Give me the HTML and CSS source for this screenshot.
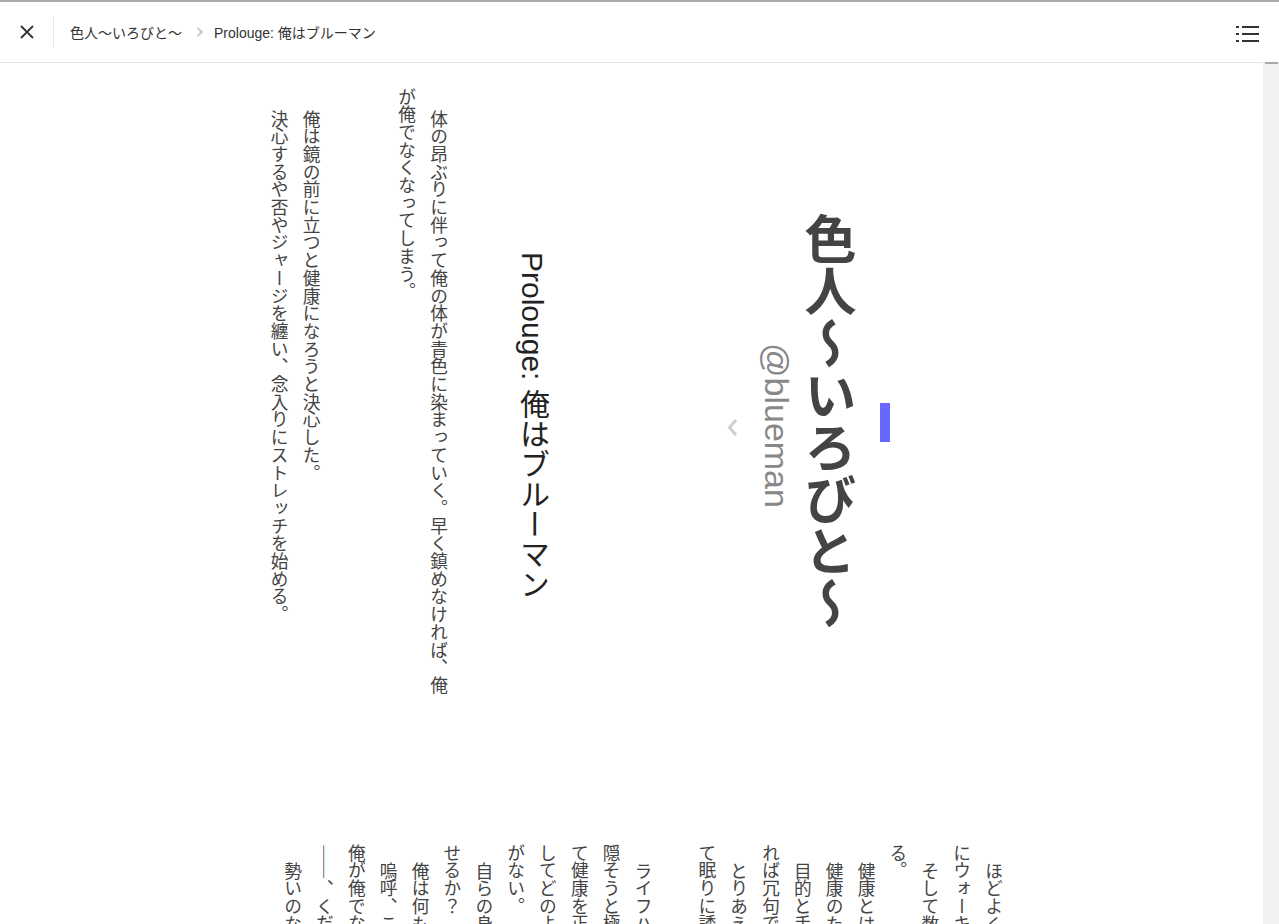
FILE: index.html
```html
<!DOCTYPE html>
<html lang="ja">
<head>
<meta charset="utf-8">
<title>Prolouge: 俺はブルーマン - 色人～いろびと～</title>
<link rel="stylesheet" href="styles.css">
</head>
<body>
<header class="topbar">
  <button class="icon-btn close-btn" aria-label="閉じる">
    <svg width="14" height="14" viewBox="0 0 14 14"><path d="M1 1 L13 13 M13 1 L1 13" stroke="#333" stroke-width="1.8" fill="none"/></svg>
  </button>
  <div class="divider"></div>
  <nav class="crumbs">
    <span class="crumb">色人～いろびと～</span>
    <svg class="crumb-sep" width="8" height="10" viewBox="0 0 8 10"><path d="M1.5 1 L6 5 L1.5 9" stroke="#c8c8c8" stroke-width="2" fill="none"/></svg>
    <span class="crumb">Prolouge: 俺はブルーマン</span>
  </nav>
  <button class="icon-btn toc-btn" aria-label="目次">
    <svg width="23" height="16" viewBox="0 0 23 16"><g fill="#333"><rect x="0" y="0" width="3" height="2"/><rect x="6" y="0" width="17" height="2"/><rect x="0" y="7" width="3" height="2"/><rect x="6" y="7" width="17" height="2"/><rect x="0" y="14" width="3" height="2"/><rect x="6" y="14" width="17" height="2"/></g></svg>
  </button>
</header>
<div class="main">
  <div class="viewport">
    <div class="pages">
      <section class="page page-first">
        <div class="title-block">
          <h1 class="book-title">色人～いろびと～</h1>
          <p class="author">@blueman</p>
        </div>
        <h2 class="chapter">Prolouge: 俺はブルーマン</h2>
        <p class="para first-para">体の昂ぶりに伴って俺の体が青色に染まっていく。早く鎮めなければ、俺が俺でなくなってしまう。</p>
        <p class="gap"></p>
        <p class="gap"></p>
        <p class="para">俺は鏡の前に立つと健康になろうと決心した。</p>
        <p class="para">決心するや否やジャージを纏い、念入りにストレッチを始める。</p>
        <span class="marker"></span>
        <span class="prev-page"><svg width="11" height="19" viewBox="0 0 11 19"><path d="M9 2 L2.5 9.5 L9 17" stroke="#cfcfcf" stroke-width="3" fill="none"/></svg></span>
      </section>
      <section class="page">
        <p class="para">ほどよく体がほぐれたところで、俺は玄関を出て近所の河川敷まで軽快<br>にウォーキングへ出かけた。朝の空気は澄んでいて心地よい。</p>
        <p class="para">そして数十分ほど歩いたところで、俺はふと立ち止まって考え始め<br>る。</p>
        <p class="para">健康とはいったい何なのだろうか。</p>
        <p class="para">健康のために体を動かしているはずが、いつしか義務になっている。</p>
        <p class="para">目的と手段が入れ替わってしまえば、それはもはや滑稽であり、言うな<br>れば冗句でしかない。</p>
        <p class="para">とりあえず今日のところは家に帰り、シャワーを浴びて布団に潜っ<br>て眠りに誘われるまま、ぼんやりと天井を眺めることにした。</p>
        <p class="gap"></p>
        <p class="para">ライフハックと呼ばれるものの数々は、結局のところ己の怠惰を<br>隠そうと極端な方向へ走る人間の言い訳にすぎないのかもしれない。そし<br>て健康を正しく追い求めることなど、凡人の俺にできるはずもなく、果た<br>してどのようにして生きていけばいいのか、俺にはまるで見当のつけよう<br>がない。</p>
        <p class="para">自らの身体を青く染めるこの厄介な体質を、果たして俺は制御してみ<br>せるか？</p>
        <p class="para">俺は何もかも投げ出してしまいたい気分になった。</p>
        <p class="para">嗚呼、このまま青に染まりきってしまえば、きっといつの日か本当に<br>俺が俺でなくなってしまうのだろう。そんな予感がしてならない。<br>――、くだらない。そんなことを考えている暇があるなら歩けばいい。</p>
        <p class="para">勢いのない足取りで、俺は再び河川敷を歩き始めた。</p>
      </section>
    </div>
  </div>
  <div class="scrollbar"><div class="thumb"></div></div>
</div>
</body>
</html>
```

FILE: styles.css
```css
* { box-sizing: border-box; }

html, body {
  margin: 0;
  height: 100%;
  overflow: hidden;
  background: #fff;
}

body {
  font-family: "Liberation Sans", "Noto Sans CJK JP", sans-serif;
  color: #333;
  display: flex;
  flex-direction: column;
}

.topbar {
  flex: none;
  height: 62px;
  border-top: 2px solid #a9a9a9;
  display: flex;
  align-items: center;
  padding-right: 20px;
  background: #fff;
}

.icon-btn {
  border: 0;
  background: none;
  padding: 0;
  margin: 0;
  display: flex;
  align-items: center;
  justify-content: center;
  cursor: pointer;
}

.close-btn {
  width: 53px;
  height: 100%;
  padding-left: 1px;
}

.divider {
  width: 1px;
  height: 32px;
  background: #e8e8e8;
}

.crumbs {
  margin-left: 16px;
  display: flex;
  align-items: center;
  font-size: 14px;
  color: #333;
}

.crumb-sep {
  margin: 0 10px 0 14px;
}

.toc-btn {
  margin-left: auto;
  margin-top: 4px;
  width: 23px;
  height: 16px;
}

.main {
  flex: 1;
  display: flex;
  min-height: 0;
}

.viewport {
  flex: 1;
  border-top: 1px solid #e5e5e5;
  overflow: hidden;
}

.scrollbar {
  flex: none;
  width: 16px;
  background: #f1f1f1;
  padding: 0 1px 0 2px;
}

.thumb {
  height: 2px;
  background: #a8a8a8;
}

.pages {
  display: flex;
  flex-direction: column;
  align-items: center;
  gap: 82px;
  padding-top: 25px;
}

.page {
  writing-mode: vertical-rl;
  flex: none;
  width: 755px;
  height: 674px;
  position: relative;
  font-family: "Noto Sans CJK JP", sans-serif;
  font-size: 17.7px;
  line-height: 1.8;
  color: #444;
}

.para {
  margin: 0;
  text-indent: 1em;
  inline-size: 610px;
}

.page-first .para {
  text-indent: calc(1em + 4px);
}

.gap {
  margin: 0;
  block-size: 1.8em;
}

.title-block {
  margin-right: 149px;
  text-align: center;
}

.book-title {
  margin: 0 0 8px 0;
  font-family: "Noto Sans CJK JP", sans-serif;
  font-size: 52px;
  line-height: 60px;
  font-weight: 700;
  color: #444;
}

.author {
  margin: 0 3px 0 0;
  font-family: "Liberation Sans", sans-serif;
  font-size: 34px;
  line-height: 40px;
  color: #888;
}

.chapter {
  margin: 0 205px 0 0;
  font-family: "Liberation Sans", "Noto Sans CJK JP", sans-serif;
  font-size: 30px;
  line-height: 40px;
  font-weight: 400;
  color: #222;
  text-align: center;
}

.first-para {
  margin-right: 58px;
}

.marker {
  position: absolute;
  left: 626px;
  top: 315px;
  width: 10px;
  height: 39px;
  background: #6868ff;
}

.prev-page {
  position: absolute;
  left: 473px;
  top: 330px;
  width: 11px;
  height: 19px;
  display: block;
}

.prev-page svg {
  display: block;
}
```
